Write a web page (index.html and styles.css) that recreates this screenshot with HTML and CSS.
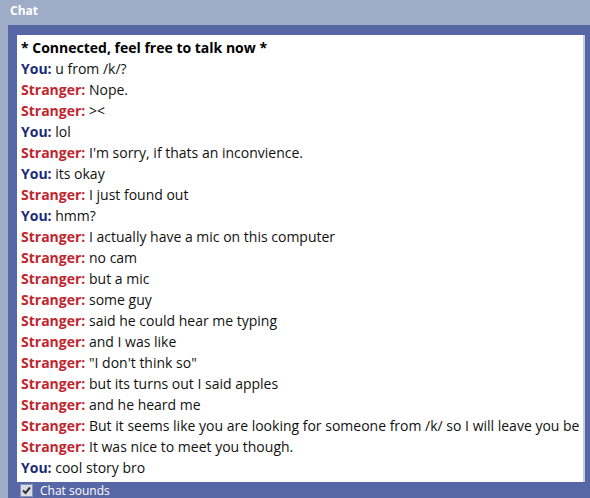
FILE: index.html
```html
<!DOCTYPE html>
<html>
<head>
<meta charset="utf-8">
<link rel="stylesheet" href="styles.css">
</head>
<body>
<div class="title">Chat</div>
<div class="panel">
  <div class="log">
    <div class="line status">* Connected, feel free to talk now *</div>
    <div class="line"><span class="you">You:</span> u from /k/?</div>
    <div class="line"><span class="str">Stranger:</span> Nope.</div>
    <div class="line"><span class="str">Stranger:</span> &gt;&lt;</div>
    <div class="line"><span class="you">You:</span> lol</div>
    <div class="line"><span class="str">Stranger:</span> I'm sorry, if thats an inconvience.</div>
    <div class="line"><span class="you">You:</span> its okay</div>
    <div class="line"><span class="str">Stranger:</span> I just found out</div>
    <div class="line"><span class="you">You:</span> hmm?</div>
    <div class="line"><span class="str">Stranger:</span> I actually have a mic on this computer</div>
    <div class="line"><span class="str">Stranger:</span> no cam</div>
    <div class="line"><span class="str">Stranger:</span> but a mic</div>
    <div class="line"><span class="str">Stranger:</span> some guy</div>
    <div class="line"><span class="str">Stranger:</span> said he could hear me typing</div>
    <div class="line"><span class="str">Stranger:</span> and I was like</div>
    <div class="line"><span class="str">Stranger:</span> "I don't think so"</div>
    <div class="line"><span class="str">Stranger:</span> but its turns out I said apples</div>
    <div class="line"><span class="str">Stranger:</span> and he heard me</div>
    <div class="line"><span class="str">Stranger:</span> But it seems like you are looking for someone from /k/ so I will leave you be</div>
    <div class="line"><span class="str">Stranger:</span> It was nice to meet you though.</div>
    <div class="line"><span class="you">You:</span> cool story bro</div>
  </div>
  <label class="sounds">
    <span class="box"><svg width="11" height="11" viewBox="0 0 11 11"><path d="M2 5.5 L4.5 8 L9 2.5" fill="none" stroke="#333" stroke-width="2"/></svg></span>
    <span>Chat sounds</span>
  </label>
</div>
</body>
</html>
```
FILE: styles.css
```css
html, body {
  margin: 0;
  padding: 0;
  background: #9eacc7;
  overflow: hidden;
  height: 498px;
}
body {
  font-family: "Open Sans", "Noto Sans", sans-serif;
}
.title {
  height: 25px;
  line-height: 22px;
  padding-left: 10px;
  color: #fff;
  font-weight: bold;
  font-size: 12px;
}
.panel {
  margin-left: 8px;
  background: #5767a6;
  padding: 10px 5px 0 9px;
  height: 473px;
  box-sizing: border-box;
}
.log {
  background: #fff;
  height: 447px;
  box-sizing: border-box;
  border-right: 2px solid #c9cede;
  padding: 2px 0 0 4px;
  font-size: 14px;
  color: #111;
  white-space: nowrap;
  overflow: hidden;
}
.line {
  line-height: 21px;
}
.status {
  font-weight: bold;
  color: #000;
}
.you {
  color: #1b2a78;
  font-weight: bold;
}
.str {
  color: #c1262e;
  font-weight: bold;
}
.sounds {
  display: flex;
  align-items: center;
  gap: 7px;
  height: 16px;
  margin-left: 3px;
  color: #fff;
  font-size: 12px;
}
.box {
  width: 11px;
  height: 11px;
  background: #d8dbe6;
  border: 1px solid #8a93b8;
  display: flex;
}
```
